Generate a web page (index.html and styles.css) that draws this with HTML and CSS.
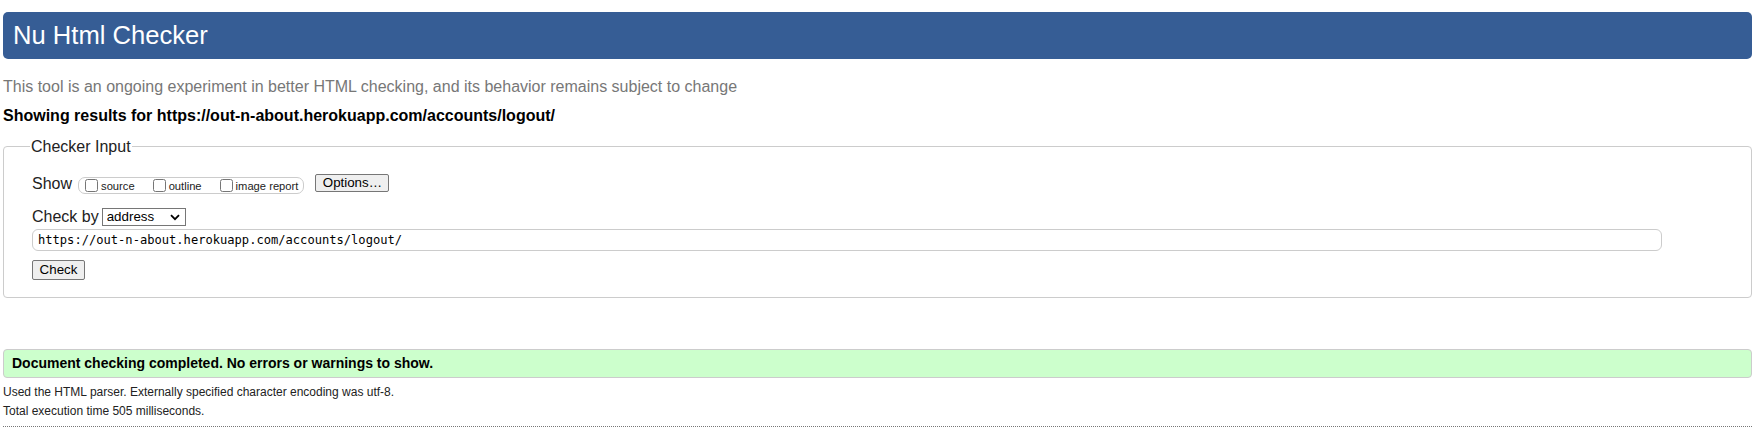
FILE: index.html
```html
<!DOCTYPE html>
<html lang="en">
<head>
<meta charset="utf-8">
<title>Showing results for https://out-n-about.herokuapp.com/accounts/logout/ - Nu Html Checker</title>
<link rel="stylesheet" href="styles.css">
</head>
<body>
<h1 class="title">Nu Html Checker</h1>
<p class="intro">This tool is an ongoing experiment in better HTML checking, and its behavior remains subject to change</p>
<p class="showing">Showing results for https://out-n-about.herokuapp.com/accounts/logout/</p>
<form class="checker">
  <fieldset class="checker-input">
    <legend class="legend">Checker Input</legend>
    <div class="row show-row">
      <span class="row-label">Show</span>
      <span class="show-options">
        <label class="opt"><input type="checkbox" class="cb">source</label>
        <label class="opt"><input type="checkbox" class="cb">outline</label>
        <label class="opt last"><input type="checkbox" class="cb">image report</label>
      </span>
      <button type="button" class="btn options-btn">Options…</button>
    </div>
    <div class="row by-row">
      <span class="row-label">Check by</span>
      <span class="select-wrap">
        <select class="select"><option>address</option></select>
        <svg class="chevron" width="10" height="7" viewBox="0 0 10 7" aria-hidden="true"><path d="M1 1.2 L5 5.2 L9 1.2" fill="none" stroke="#000" stroke-width="1.8"/></svg>
      </span>
    </div>
    <div class="row url-row">
      <input class="url" type="text" value="https://out-n-about.herokuapp.com/accounts/logout/">
    </div>
    <div class="row submit-row">
      <button type="button" class="btn check-btn">Check</button>
    </div>
  </fieldset>
</form>
<p class="success">Document checking completed. No errors or warnings to show.</p>
<p class="details">Used the HTML parser. Externally specified character encoding was utf-8.</p>
<p class="details">Total execution time 505 milliseconds.</p>
<hr class="dotted">
</body>
</html>
```
FILE: styles.css
```css
html, body {
  background: #fff;
}
body {
  margin: 0;
  padding: 12px 4px 0 3px;
  font-family: "Liberation Sans", Arial, sans-serif;
  color: #000;
}
.title {
  margin: 0;
  height: 47px;
  line-height: 47px;
  padding: 0 10px;
  background: #365d95;
  color: #fff;
  font-size: 25.6px;
  font-weight: normal;
  border-radius: 5px;
}
.intro {
  margin: 18px 0 0;
  line-height: 20px;
  font-size: 16px;
  color: #777;
}
.showing {
  margin: 9px 0 0;
  line-height: 20px;
  font-size: 16px;
  font-weight: bold;
}
.checker {
  margin: 0;
}
.checker-input {
  margin: 9px 0 0;
  padding: 17px 10px 17px 28px;
  border: 1px solid #ccc;
  border-radius: 4px;
  min-width: 0;
}
.legend {
  padding: 2px 1px 0;
  margin-left: -2px;
  font-size: 16px;
  line-height: 20px;
  color: #222;
}
.row {
  display: flex;
  align-items: center;
}
.show-row {
  height: 20px;
}
.by-row {
  height: 20px;
  margin-top: 13px;
}
.url-row {
  margin-top: 2px;
}
.submit-row {
  margin-top: 9px;
}
.row-label {
  font-size: 16px;
  line-height: 19px;
  color: #222;
  padding-bottom: 2px;
}
.show-options {
  display: flex;
  align-items: center;
  height: 15px;
  margin-left: 6px;
  padding: 0 5px 0 2px;
  border: 1px solid #ccc;
  border-radius: 7px;
  margin-top: 3px;
}
.opt {
  display: flex;
  align-items: center;
  font-size: 11.2px;
  color: #222;
  margin-right: 14px;
}
.opt.last {
  margin-right: 0;
}
.cb {
  width: 13px;
  height: 13px;
  margin: 0 3px 0 4px;
}
.btn {
  font-family: "Liberation Sans", Arial, sans-serif;
  font-size: 13.33px;
  color: #000;
  background: #efefef;
  border: 1px solid #767676;
  border-radius: 2px;
  padding: 0 6px;
  height: 20px;
  line-height: 16px;
}
.options-btn {
  margin-left: 11px;
  height: 18px;
  width: 74px;
  margin-top: -2px;
}
.check-btn {
  width: 53px;
}
.select-wrap {
  position: relative;
  display: inline-flex;
  margin-left: 3px;
}
.select {
  appearance: none;
  -webkit-appearance: none;
  width: 84px;
  height: 18px;
  margin: 0;
  font-family: "Liberation Sans", Arial, sans-serif;
  font-size: 13.33px;
  line-height: 16px;
  color: #000;
  background: #fff;
  border: 1px solid #767676;
  border-radius: 0;
  padding: 0 0 0 4px;
}
.chevron {
  position: absolute;
  right: 6px;
  top: 6px;
  pointer-events: none;
}
.url {
  box-sizing: border-box;
  width: 1630px;
  height: 22px;
  margin: 0;
  padding: 0 5px;
  border: 1px solid #ccc;
  border-radius: 6px;
  font-family: "DejaVu Sans Mono", "Liberation Mono", monospace;
  font-size: 12.1px;
  color: #000;
}
.success {
  margin: 51px 0 0;
  height: 27px;
  line-height: 27px;
  padding: 0 8px;
  background: #ccffcc;
  border: 1px solid #ccc;
  border-radius: 4px;
  font-size: 14px;
  font-weight: bold;
}
.details {
  margin: 0;
  font-size: 12px;
  line-height: 19px;
  color: #222;
}
.success + .details {
  margin-top: 5px;
}
.dotted {
  margin: 5px 0 0;
  height: 0;
  border: 0;
  border-top: 1px dotted #777;
}
```
